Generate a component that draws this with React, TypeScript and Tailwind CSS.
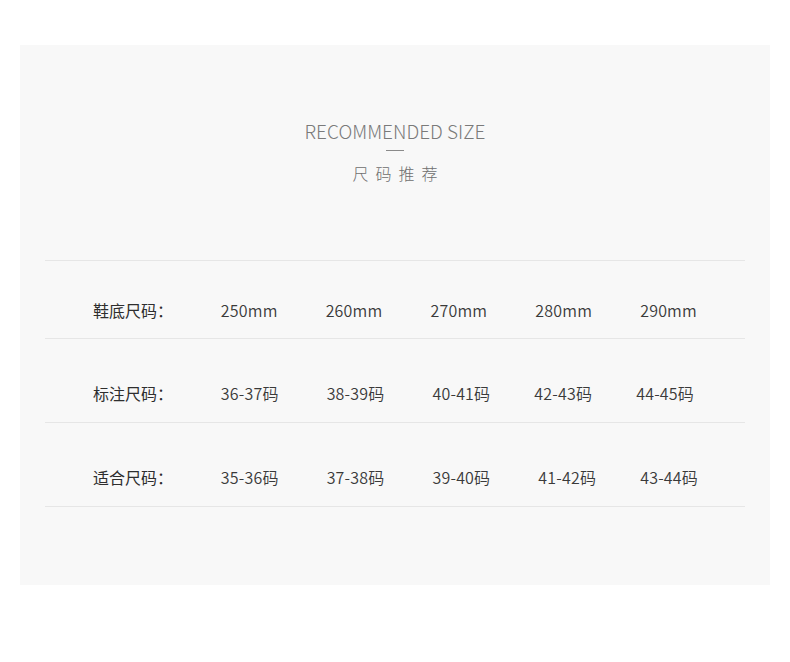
const rows = [
  {
    label: "鞋底尺码：",
    cells: [
      ["250mm", "ml-0"],
      ["260mm", "ml-0"],
      ["270mm", "ml-0"],
      ["280mm", "ml-0"],
      ["290mm", "ml-0"],
    ],
  },
  {
    label: "标注尺码：",
    cells: [
      ["36-37码", "ml-0"],
      ["38-39码", "ml-px"],
      ["40-41码", "ml-[2px]"],
      ["42-43码", "ml-[-1px]"],
      ["44-45码", "ml-[-4px]"],
    ],
  },
  {
    label: "适合尺码：",
    cells: [
      ["35-36码", "ml-0"],
      ["37-38码", "ml-px"],
      ["39-40码", "ml-[2px]"],
      ["41-42码", "ml-[3px]"],
      ["43-44码", "ml-0"],
    ],
  },
];

export default function App() {
  return (
    <div
      className="w-[790px] h-[662px] bg-white pt-[45px] px-5"
      style={{ fontFamily: '"Noto Sans CJK SC", "Noto Sans", sans-serif' }}
    >
      <div className="h-[540px] bg-[#f8f8f8] px-[25px]">
        {/* Heading */}
        <div className="flex flex-col items-center pt-[72px]">
          <div className="text-[19px] leading-[27px] font-light text-[#7a7a7a]">
            RECOMMENDED SIZE
          </div>
          <div className="w-[18px] h-px bg-[#8a8a8a] mt-[6px]" />
          <div className="mt-[12px] text-[16px] leading-[20px] font-light text-[#6e6e6e] tracking-[7px] pl-[7px]">
            尺码推荐
          </div>
        </div>

        {/* Table */}
        <div className="mt-[77px] border-t border-[#e6e6e6]">
          {rows.map((row, i) => (
            <div
              key={row.label}
              className={`flex items-center border-b border-[#e6e6e6] pl-12 ${
                i === 0 ? "h-[78px] pt-5" : "h-[84px] pt-6"
              }`}
            >
              <div className="w-[128px] text-[16px] text-[#2e2e2e]">{row.label}</div>
              {row.cells.map(([v, off]) => (
                <div key={v} className="w-[105px] text-[16px] font-[350] tracking-[0.2px] text-[#3a3a3a]">
                  <span className={`inline-block ${off}`}>{v}</span>
                </div>
              ))}
            </div>
          ))}
        </div>
      </div>
    </div>
  );
}
